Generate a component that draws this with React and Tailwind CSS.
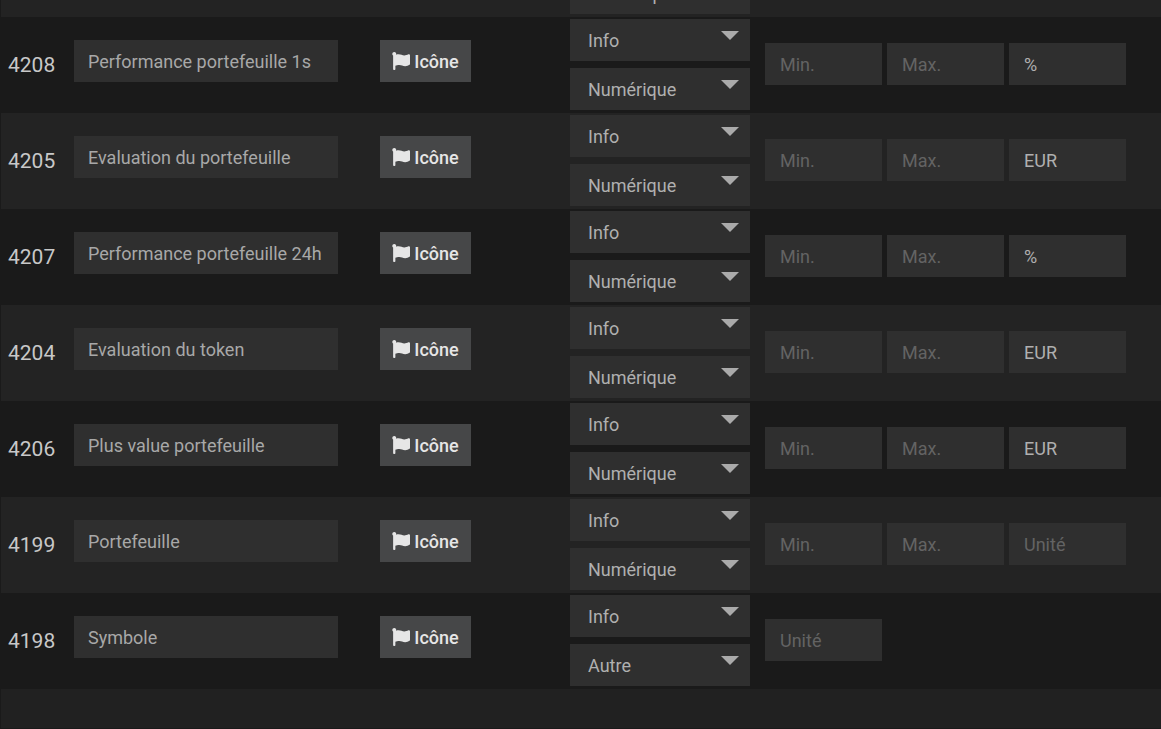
import React from "react";
import { FaFlag } from "react-icons/fa";

const ROWS = [
  { id: "4208", name: "Performance portefeuille 1s", subtype: "Numérique", unit: "%" },
  { id: "4205", name: "Evaluation du portefeuille", subtype: "Numérique", unit: "EUR" },
  { id: "4207", name: "Performance portefeuille 24h", subtype: "Numérique", unit: "%" },
  { id: "4204", name: "Evaluation du token", subtype: "Numérique", unit: "EUR" },
  { id: "4206", name: "Plus value portefeuille", subtype: "Numérique", unit: "EUR" },
  { id: "4199", name: "Portefeuille", subtype: "Numérique", unit: "" },
  { id: "4198", name: "Symbole", subtype: "Autre", unit: "" },
];

function Select({ label, value, options }) {
  return (
    <div className="relative h-[42px] w-[180px]">
      <select
        aria-label={label}
        defaultValue={value}
        className="block h-full w-full appearance-none bg-[#2f2f2f] pr-10 pl-[18px] text-[#b0b0b0] outline-none"
      >
        {options.map((o) => (
          <option key={o}>{o}</option>
        ))}
      </select>
      <svg
        viewBox="0 0 18 9"
        className="pointer-events-none absolute top-3 right-[11px] h-[9px] w-[18px] fill-[#aaaaaa]"
        aria-hidden="true"
      >
        <path d="M0 0h18L9 9z" />
      </svg>
    </div>
  );
}

function TypeSelects({ subtype }) {
  return (
    <div className="flex flex-col gap-[7px]">
      <Select label="Type" value="Info" options={["Info", "Action"]} />
      <Select label="Sous-type" value={subtype} options={["Numérique", "Binaire", "Autre"]} />
    </div>
  );
}

function Field({ label, value = "" }) {
  return (
    <input
      type="text"
      aria-label={label}
      placeholder={label}
      defaultValue={value}
      className="h-[42px] w-[117px] bg-[#2f2f2f] px-[15px] text-[#b0b0b0] outline-none placeholder:text-[#636363]"
    />
  );
}

function Row({ row }) {
  return (
    <tr className="h-24 odd:bg-[#232323] even:bg-[#1a1a1a]">
      <td className="pt-0.5 pl-[7px] text-[21px] text-[#c8c8c8]">{row.id}</td>
      <td className="px-2 pb-2">
        <input
          type="text"
          aria-label="Nom"
          defaultValue={row.name}
          className="block h-[42px] w-[264px] bg-[#2f2f2f] px-[14px] text-[#a8a8a8] outline-none"
        />
      </td>
      <td className="px-2 pb-2">
        <button
          type="button"
          className="flex h-[42px] w-[91px] items-center justify-center gap-1 bg-[#464748] font-medium text-[#e6e6e6]"
        >
          <FaFlag className="size-[18px]" aria-hidden="true" />
          Icône
        </button>
      </td>
      <td className="px-2 pt-0.5 align-top">
        <TypeSelects subtype={row.subtype} />
      </td>
      <td className="pb-0.5 pl-2">
        <div className="flex gap-[5px]">
          {row.subtype === "Numérique" && (
            <>
              <Field label="Min." />
              <Field label="Max." />
            </>
          )}
          <Field label="Unité" value={row.unit} />
        </div>
      </td>
    </tr>
  );
}

export default function App() {
  return (
    <main className="h-screen overflow-hidden bg-[#1a1a1a] pl-px font-['Roboto',sans-serif] text-[18px]">
      <table className="-mt-[79px] w-full table-fixed border-collapse">
        <colgroup>
          <col className="w-[65px]" />
          <col className="w-[306px]" />
          <col className="w-[190px]" />
          <col className="w-[195px]" />
          <col />
        </colgroup>
        <tbody>
          <tr className="h-24 bg-[#232323]">
            <td colSpan={3} />
            <td className="px-2 pt-0.5 align-top">
              <TypeSelects subtype="Numérique" />
            </td>
            <td />
          </tr>
          {ROWS.map((row) => (
            <Row key={row.id} row={row} />
          ))}
        </tbody>
      </table>
      <div className="h-10 border-b border-[#1a1a1a] bg-[#212121]" />
    </main>
  );
}
